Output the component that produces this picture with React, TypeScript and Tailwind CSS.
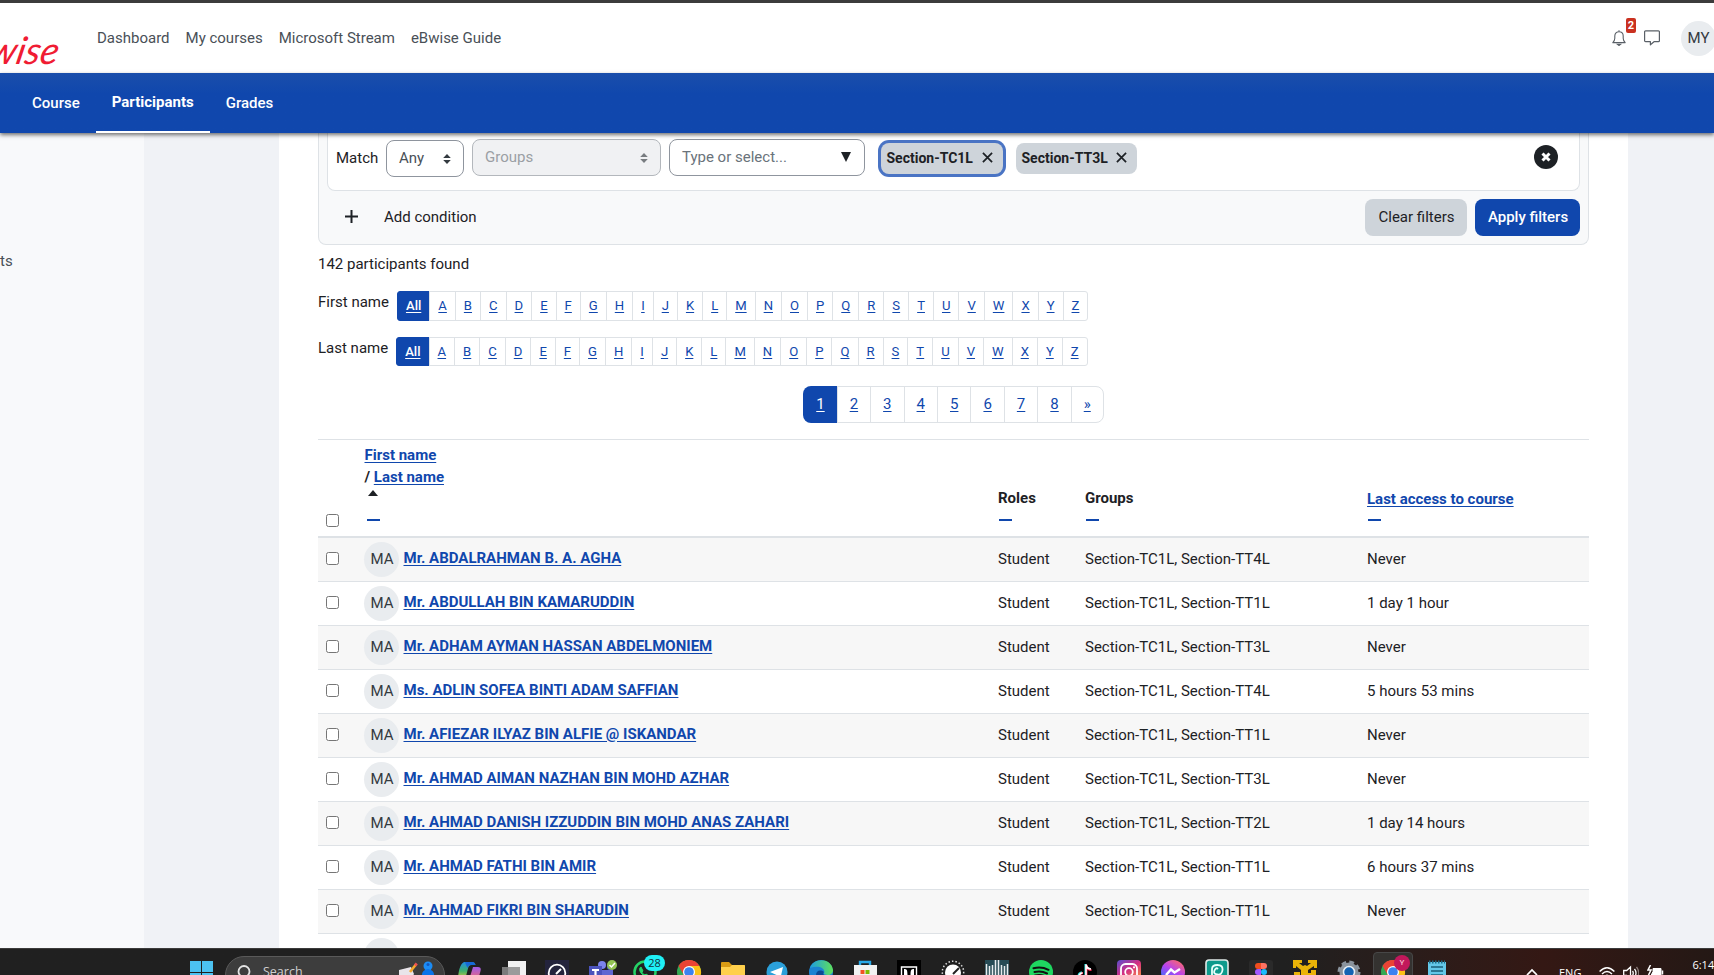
import React from "react";

const LETTERS = "ABCDEFGHIJKLMNOPQRSTUVWXYZ".split("");

const PEOPLE = [
  ["Mr. ABDALRAHMAN B. A. AGHA", "TT4L", "Never"],
  ["Mr. ABDULLAH BIN KAMARUDDIN", "TT1L", "1 day 1 hour"],
  ["Mr. ADHAM AYMAN HASSAN ABDELMONIEM", "TT3L", "Never"],
  ["Ms. ADLIN SOFEA BINTI ADAM SAFFIAN", "TT4L", "5 hours 53 mins"],
  ["Mr. AFIEZAR ILYAZ BIN ALFIE @ ISKANDAR", "TT1L", "Never"],
  ["Mr. AHMAD AIMAN NAZHAN BIN MOHD AZHAR", "TT3L", "Never"],
  ["Mr. AHMAD DANISH IZZUDDIN BIN MOHD ANAS ZAHARI", "TT2L", "1 day 14 hours"],
  ["Mr. AHMAD FATHI BIN AMIR", "TT1L", "6 hours 37 mins"],
  ["Mr. AHMAD FIKRI BIN SHARUDIN", "TT1L", "Never"],
];

const COLS = "grid grid-cols-[46px_633px_87px_282px_1fr]";

function Header() {
  return (
    <header className="flex h-[73px] shrink-0 items-start border-t-[3px] border-[#3c3c3c] bg-white text-[#495057]">
      <div className="flex h-[70px] w-[97px] shrink-0 items-start justify-end overflow-hidden pr-[42px] pt-[22px]">
        <span className="origin-bottom -skew-x-12 whitespace-nowrap font-['Lato'] text-[38px] font-normal italic leading-[48px] text-[#f01c33]">wise</span>
      </div>
      <nav className="flex gap-4 pt-[24px]">
        <span>Dashboard</span>
        <span>My courses</span>
        <span>Microsoft Stream</span>
        <span>eBwise Guide</span>
      </nav>
      <div className="-mr-[2px] ml-auto flex h-[70px] shrink-0 items-center">
        <div className="relative mr-[18px] h-4 w-[14px]">
          <svg viewBox="0 0 14 16" className="h-4 w-[14px]" fill="none" stroke="#5a6067" strokeWidth="1.1">
            <path d="M7 .3v1.3M.8 12.6h12.4c-1.400-1.200-2-2.400-2-4.300V6C11.200 3.400 9.400 1.700 7 1.700S2.800 3.400 2.800 6v2.300c0 1.900-.6 3.100-2 4.300Z" strokeLinejoin="round" />
            <path d="M5.400 14.200h3.200L7 15.500Z" fill="#5a6067" />
          </svg>
          <span className="absolute left-[14px] top-[-12px] h-[15px] w-[10px] rounded-[2px] bg-[#ca3120] text-center text-[11px] font-bold leading-[15px] text-white">2</span>
        </div>
        <svg viewBox="0 0 16 16" className="mr-[21px] size-4" fill="none" stroke="#5a6067" strokeWidth="1.2">
          <path d="M1.600.8h12.800a1 1 0 0 1 1 1v8.900a1 1 0 0 1-1 1H10l-3.600 3.100v-3.100H1.600a1 1 0 0 1-1-1V1.800a1 1 0 0 1 1-1Z" strokeLinejoin="round" />
        </svg>
        <span className="flex size-[35px] shrink-0 items-center justify-center rounded-full bg-[#e9ecef] text-[15px] text-[#343a40]">MY</span>
      </div>
    </header>
  );
}

function CourseNav() {
  return (
    <nav className="relative z-10 flex h-[60px] shrink-0 bg-linear-to-b from-[#1a4eab] to-[#1047ad] to-35% pl-[16px] text-white shadow-[0_2px_4px_rgba(0,0,0,0.55)]">
      <span className="px-4 pt-[19px] font-medium">Course</span>
      <span className="border-b-2 border-white px-4 pt-[18px] font-bold">Participants</span>
      <span className="px-4 pt-[19px] font-medium">Grades</span>
    </nav>
  );
}

function Sorter({ className }: { className: string }) {
  return (
    <svg viewBox="0 0 8 10" className={`h-[10px] w-2 ${className}`} fill="currentColor">
      <path d="M4 0l3.800 4H.2ZM4 10 .2 6h7.600Z" />
    </svg>
  );
}

function Tag({ text, active }: { text: string; active?: boolean }) {
  return (
    <span className={`flex h-[31px] items-center whitespace-nowrap rounded-lg bg-[#ced4da] pl-[5.500px] pr-[10px] font-bold text-[#1d2125] ${active ? "w-[122px] ring-3 ring-[#4a74c4]" : "w-[121px]"}`}>
      <span className="text-[14px]">{text}</span>
      <svg viewBox="0 0 12 12" className="ml-auto mb-[3px] size-[11px]" stroke="#1d2125" strokeWidth="1.9">
        <path d="M1 1l10 10M11 1L1 11" />
      </svg>
    </span>
  );
}

function Filters() {
  return (
    <section className="h-[112px] rounded-b-lg border border-t-0 border-[#dee2e6] bg-[#f8f9fa] px-2">
      <div className="flex h-[58px] items-start rounded-b-lg border border-t-0 border-[#dee2e6] bg-white pl-2 pr-[21px] pt-[6px]">
        <span className="w-[50px] pt-[8px]">Match</span>
        <span className="mt-px flex h-[37px] w-[78px] items-center justify-between rounded-lg border border-[#8f959e] bg-white pl-3 pr-3 text-[#495057]">Any<Sorter className="text-[#343a40]" /></span>
        <span className="ml-2 flex h-[37px] w-[189px] items-center justify-between rounded-lg border border-[#b3b7bc] bg-[#f0f1f3] pl-3 pr-3 text-[#9b9fa4]">Groups<Sorter className="text-[#787c80]" /></span>
        <span className="ml-2 flex h-[37px] w-[196px] items-center justify-between rounded-lg border border-[#8f959e] bg-white pl-3 pr-[13px] text-[#6a737b]">Type or select...
          <svg viewBox="0 0 10 10" className="mb-[2px] size-[10px]" fill="#1d2125"><path d="M0 0h10L5 10Z" /></svg>
        </span>
        <div className="ml-4 mt-1 flex gap-[13px]">
          <Tag text="Section-TC1L" active />
          <Tag text="Section-TT3L" />
        </div>
        <svg viewBox="0 0 24 24" className="ml-auto mt-[6px] size-6">
          <circle cx="12" cy="12" r="12" fill="#1d2125" />
          <path d="M8.500 8.500l7 7m0-7-7 7" stroke="#fff" strokeWidth="3" />
        </svg>
      </div>
      <div className="flex h-[53px] items-center text-[#1d2125]">
        <svg viewBox="0 0 13 13" className="mb-[2px] ml-[18px] size-[13px]" stroke="#1d2125" strokeWidth="2"><path d="M6.500 0v13M0 6.500h13" /></svg>
        <span className="ml-[26px]">Add condition</span>
        <button className="ml-auto mr-2 h-[37px] w-[102px] rounded-lg bg-[#ced4da] pl-px">Clear filters</button>
        <button className="h-[37px] w-[105px] rounded-lg bg-[#1047ad] pl-px font-medium text-white">Apply filters</button>
      </div>
    </section>
  );
}

function Initials({ label, className }: { label: string; className: string }) {
  return (
    <div className={`flex ${className}`}>
      <span className="mr-2 whitespace-nowrap">{label}</span>
      <div className="flex text-[13.1px] leading-[20px] text-[#1047ad]">
        <span className="rounded-l-[3px] border border-[#1047ad] bg-[#1047ad] px-2 py-1 font-medium text-white underline underline-offset-2">All</span>
        {LETTERS.map((l) => (
          <span key={l} className="-ml-px border border-[#dee2e6] px-2 py-1 underline underline-offset-2 last:rounded-r-[3px] first-of-type:ml-0">{l}</span>
        ))}
      </div>
    </div>
  );
}

function Pager() {
  return (
    <div className="mt-[20px] flex h-[37px] justify-center text-[#1047ad]">
      <span className="rounded-l-lg bg-[#1047ad] px-[13px] py-[7px] text-white underline underline-offset-2">1</span>
      {["2", "3", "4", "5", "6", "7", "8", "»"].map((p) => (
        <span key={p} className="-ml-px border border-[#dee2e6] px-3 py-[6px] underline underline-offset-2 last:rounded-r-lg">{p}</span>
      ))}
    </div>
  );
}

function Box({ className }: { className: string }) {
  return <span className={`size-[13px] rounded-[2.5px] border border-[#767676] bg-white ${className}`} />;
}

function Dash() {
  return <span className="ml-px h-[2px] w-[13px] bg-[#1047ad]" />;
}

function Table() {
  return (
    <div className="mt-4 border-t border-[#dee2e6]">
      <div className={`${COLS} h-[98px] border-b-2 border-[#dee2e6] font-bold`}>
        <Box className="ml-2 mt-[74px]" />
        <div className="flex flex-col items-start pl-[0.500px] pt-[4px] leading-[22px] text-[#1047ad]">
          <span className="underline underline-offset-2">First name</span>
          <span><span className="text-[#1d2125]">/ </span><span className="underline underline-offset-2">Last name</span></span>
          <svg viewBox="0 0 10 6" className="ml-[3px] mt-[2px] h-[6px] w-[10px]" fill="#1d2125"><path d="M5 0l5 6H0Z" /></svg>
          <span className="ml-[2px] mt-[23px] h-[2px] w-[13px] bg-[#1047ad]" />
        </div>
        <div className="flex flex-col gap-[10px] pl-px pt-[47px] text-[#1d2125]">Roles<Dash /></div>
        <div className="flex flex-col gap-[10px] pl-px pt-[47px] text-[#1d2125]">Groups<Dash /></div>
        <div className="flex flex-col gap-[9px] pl-px pt-[48px] text-[#1047ad]"><span className="underline underline-offset-2">Last access to course</span><Dash /></div>
      </div>
      {PEOPLE.map(([name, group, access], i) => (
        <div key={name} className={`${COLS} h-[44px] border-b border-[#dee2e6] pt-1 ${i % 2 === 0 ? "bg-[#f7f7f7]" : "bg-white"}`}>
          <Box className="ml-2 mt-[10px]" />
          <div className="flex items-start">
            <span className="flex size-[35px] shrink-0 items-center justify-center rounded-full bg-[#e9ecef] pl-px text-[#343a40]">MA</span>
            <span className="ml-[4.500px] pt-[5px] font-bold text-[#1047ad] underline underline-offset-2">{name}</span>
          </div>
          <span className="pl-px pt-[6px]">Student</span>
          <span className="pl-px pt-[6px]">Section-TC1L, Section-{group}</span>
          <span className="pl-px pt-[6px]">{access}</span>
        </div>
      ))}
      <div className={`${COLS} h-[44px] pt-1`}>
        <span />
        <span className="size-[35px] rounded-full bg-[#e9ecef]" />
      </div>
    </div>
  );
}

function ChromeGlyph() {
  return (
    <g>
      <circle cx="12" cy="12" r="12" fill="#34a853" />
      <path d="M1.600 6A12 12 0 0 1 22.400 6L12 12Z" fill="#ea4335" />
      <path d="M12 6h10.400A12 12 0 0 1 12 24l5.200-9Z" fill="#fbc116" />
      <path d="M12 6h10.400A12 12 0 0 0 1.600 6l5.200 9Z" fill="#ea4335" />
      <circle cx="12" cy="12" r="6" fill="#fff" />
      <circle cx="12" cy="12" r="4.800" fill="#3b82f0" />
    </g>
  );
}

const APPS: React.ReactNode[] = [
  <g>
    <path d="M8 2h7c2 0 3 1 3.500 3h-4c-2 0-3 1.500-3.500 3.500L8 20H1c0-7 2-18 7-18Z" fill="url(#cop)" />
    <path d="M16 7h5c3 0 3 2 2.500 4L21 20h-9Z" fill="url(#cop2)" />
    <path d="M8 2h7c2 0 3 1 3.500 3h-5c-1.500 0-2.500 1-3 3L9 5Z" fill="#1668d6" />
  </g>,
  <g><path d="M7 1h18v18H7Z" fill="#f1f1f1" /><path d="M1 7h18v14H1Z" fill="#8c8c8c" opacity=".85" /></g>,
  <g><path d="M0 0h24v20H0Z" fill="#23233c" /><circle cx="12" cy="13" r="8.300" fill="none" stroke="#fff" strokeWidth="1.800" /><path d="m11 14 5-5" stroke="#fff" strokeWidth="2" /></g>,
  <g><circle cx="13" cy="5" r="4" fill="#7b83eb" /><circle cx="21" cy="7" r="3" fill="#5059c9" /><path d="M8 10h16v8H8Z" fill="#5f67d2" /><path d="M0 6h13v12H0Z" fill="#4b53bc" /><path d="M3 9h7v2H7.600v7H5.400v-7H3Z" fill="#fff" /><circle cx="23" cy="5" r="5" fill="#92c353" /><path d="m20.500 5 2 2 3.500-4" fill="none" stroke="#fff" strokeWidth="1.500" /></g>,
  <g><circle cx="12" cy="12" r="10.500" fill="#202020" stroke="#25d366" strokeWidth="2.500" /><path d="M8 7c-2 1-2 4 1 7s5 4 7 2l-3-2-1 1c-2-1-3-2-3-3l1-1Z" fill="#25d366" stroke="#25d366" /></g>,
  <ChromeGlyph />,
  <g><path d="M0 3q0-1 1-1h7l3 3h12q1 0 1 1v14H0Z" fill="#d99b14" /><path d="M0 7h9l2-2h12q1 0 1 1v14H0Z" fill="#ffd04c" /></g>,
  <g><circle cx="12" cy="12" r="10.500" fill="#2ba0da" /><path d="m5 12 13-5-2.500 11-4-3Z" fill="#fff" /></g>,
  <g><circle cx="12" cy="12" r="12" fill="#1b83d2" /><path d="M1 8C4-2 22-3 24 10c0 5-5 6-9 4 2-6-5-9-14-6Z" fill="url(#edge)" /><path d="M7 15c0-4 4-6 8-3-1 1-1 2 0 3Z" fill="#0c4a94" /></g>,
  <g><path d="M7 5V2h10v3" fill="none" stroke="#29a9e8" strokeWidth="2.400" /><path d="M1 5h23v16H1Z" fill="#f2f2f2" /><path d="M7.500 10h4v4h-4Z" fill="#f25022" /><path d="M12.500 10h4v4h-4Z" fill="#7fba00" /></g>,
  <g><path d="M0 0h24v20H0Z" fill="#000" /><path d="M4.500 7h15v10h-15Z" fill="none" stroke="#fff" strokeWidth="1.400" /><path d="M7 9c3 0 3.500 1 3.500 7H7Zm10 0c-3 0-3.500 1-3.500 7H17Z" fill="#fff" /></g>,
  <g><circle cx="12" cy="12" r="10.700" fill="none" stroke="#ddd" strokeWidth="1.500" strokeDasharray="1.500 2" /><circle cx="12" cy="12.500" r="8" fill="#fff" /><path d="m12 14 6-6" stroke="#222" strokeWidth="2" /></g>,
  <g><path d="M0 0h24v20H0Z" fill="#264b55" /><path d="M1.500 4v12M4.500 6v10M7.500 5v10M10.500 0v16M13.500 0v16M16.500 5v10M19.500 6v10M22.500 4v12" stroke="#e6ecee" strokeWidth="1.500" /></g>,
  <g><circle cx="12" cy="12" r="12" fill="#1ed760" /><path d="M4.500 8.200q8-2 15 1.600M5.500 12q7-1.500 12.500 1.500M6 15.500q6-1.500 11 1.300" fill="none" stroke="#111" strokeWidth="2" strokeLinecap="round" /></g>,
  <g><circle cx="12" cy="12" r="12" fill="#000" /><path d="M12.500 4v12a3.500 3.500 0 1 1-3.500-3.500M12.500 5c.5 3 2.500 4 5 4" fill="none" stroke="#25f4ee" strokeWidth="2" /><path d="M13.500 5v11a3.500 3.500 0 1 1-3.500-3M13.500 5c.5 3 2.500 5 5 5" fill="none" stroke="#fe2c55" strokeWidth="2" /><path d="M13 4.500v11.500a3.500 3.500 0 1 1-3.500-3M13 4.500c.5 3 2.500 4.500 5 4.500" fill="none" stroke="#fff" strokeWidth="1.600" /></g>,
  <g><rect width="24" height="24" rx="4" fill="url(#ig)" /><rect x="4" y="4" width="16" height="16" rx="4.500" fill="none" stroke="#fff" strokeWidth="1.800" /><circle cx="12" cy="12" r="3.800" fill="none" stroke="#fff" strokeWidth="1.800" /><circle cx="17" cy="7.300" r="1.100" fill="#fff" /></g>,
  <g><circle cx="12" cy="12" r="12" fill="url(#ms)" /><path d="m5 15 5-5.500 3.500 3L19 9" fill="none" stroke="#fff" strokeWidth="2.400" /></g>,
  <g><rect x="1" width="22" height="24" rx="3" fill="#0d9a8c" stroke="#dfe9e7" strokeWidth="1.600" /><path d="M7 17V9q0-4 5.500-4t5 5-5 4.500-3-4 3.500-1.500" fill="none" stroke="#e8fffb" strokeWidth="1.800" /></g>,
  <g><rect width="24" height="24" rx="3" fill="#2a2a2a" /><path d="M12 3v6H9a3 3 0 0 1 0-6Z" fill="#f24e1e" /><path d="M12 3h3a3 3 0 0 1 0 6h-3Z" fill="#ff7262" /><path d="M12 9v6H9a3 3 0 0 1 0-6Z" fill="#a259ff" /><circle cx="15" cy="12" r="3" fill="#1abcfe" /></g>,
  <g><path d="M0 0h9v3H6l4 3 2-1 2 1 4-3h-3V0h9v8h-3V6l-6 4v3h4v3H8V10L3 6v2H0Z" fill="#eab308" /><path d="M1 12h6v7H1Zm17-2h5v8h-5Z" fill="#eab308" /></g>,
  <g><circle cx="12" cy="12" r="8.500" fill="#8b949e" stroke="#8b949e" strokeWidth="6" strokeDasharray="4 2.680" /><circle cx="12" cy="12" r="9.500" fill="#8b949e" /><circle cx="12" cy="12" r="5.500" fill="#1463b3" stroke="#e8eef4" strokeWidth="1.500" /></g>,
  <ChromeGlyph />,
  <g><path d="M3 2h18v19H3Z" fill="#63c7e8" /><path d="M4 2h16" stroke="#1c6d88" strokeWidth="3" strokeDasharray="1.500 1.500" /><path d="M6 7h12M6 11h12M6 15h12" stroke="#1b5f78" strokeWidth="1.500" /></g>,
];

function Taskbar() {
  return (
    <footer className="flex h-[27px] w-full shrink-0 items-start overflow-hidden border-t border-[#3b3b3b] bg-linear-to-r from-[#202020] from-75% via-[#341814] via-90% to-[#241815] text-white">
      <svg className="absolute size-0">
        <defs>
          <linearGradient id="cop" x1="0" y1="0" x2="0" y2="1"><stop stopColor="#1f8fe5" /><stop offset=".5" stopColor="#3fb16b" /><stop offset="1" stopColor="#f3cc2f" /></linearGradient>
          <linearGradient id="cop2" x1="0" y1="0" x2="0" y2="1"><stop stopColor="#a05be8" /><stop offset="1" stopColor="#f06a6d" /></linearGradient>
          <linearGradient id="edge"><stop stopColor="#1e9de0" /><stop offset="1" stopColor="#5fe05a" /></linearGradient>
          <linearGradient id="ig" x1="0" y1="0" x2=".7" y2="1"><stop stopColor="#5a4fd0" /><stop offset=".5" stopColor="#d52d82" /><stop offset="1" stopColor="#fb9a3c" /></linearGradient>
          <linearGradient id="ms" x1=".8" y1="0" x2=".2" y2="1"><stop stopColor="#ff6968" /><stop offset=".45" stopColor="#b742f0" /><stop offset="1" stopColor="#1a7bff" /></linearGradient>
        </defs>
      </svg>
      <svg viewBox="0 0 23 23" className="ml-[190px] mt-[12px] size-[23px] shrink-0" fill="#4cc2f1"><path d="M0 0h11v11H0ZM12 0h11v11H12ZM0 12h11v11H0ZM12 12h11v11H12Z" /></svg>
      <div className="ml-3 mt-[7px] flex h-[38px] w-[220px] shrink-0 items-start overflow-hidden rounded-full border border-[#5a5a5a] bg-[#3d3d3d] pl-[11px]">
        <svg viewBox="0 0 14 16" className="mt-[8px] h-4 w-[14px]" fill="none" stroke="#e4e4e4" strokeWidth="1.800"><circle cx="7" cy="6.500" r="5.500" /><path d="m3 11-3 4" /></svg>
        <span className="ml-3 mt-[5px] font-['Open_Sans'] text-[12.500px] leading-[20px] text-[#cfcfcf]">Search</span>
        <svg viewBox="0 0 38 24" className="ml-auto mr-[8px] mt-[4px] h-6 w-[38px] shrink-0">
          <path d="m1 9 12-3 3 7-3 5-12-1Z" fill="#e9e4ea" /><path d="m12 11 5.500-7" stroke="#f4a92c" strokeWidth="2.600" /><path d="m17 4.500 1.800-2" stroke="#ef5350" strokeWidth="2.800" />
          <circle cx="30" cy="5" r="4.500" fill="#1b8cf5" /><path d="M24 16q-1-7 6-8 7 1 6 8Z" fill="#0a74ea" /><circle cx="30" cy="3.500" r="1.500" fill="#1158c0" />
        </svg>
      </div>
      <div className="ml-3 flex shrink-0 gap-5 pt-[11px]">
        {APPS.map((icon, i) => (
          <span key={i} className="relative block size-6 shrink-0">
            {i === 21 && <span className="absolute -left-2 -top-2 h-9 w-[40px] rounded-[4px] border border-[#474747] bg-[#343230]" />}
            <svg viewBox="0 0 24 24" className="relative size-6 overflow-visible">{icon}</svg>
            {i === 4 && <span className="absolute left-[11px] top-[-5px] flex h-4 w-[21px] items-center justify-center rounded-full bg-[#1ff0f5] font-['Open_Sans'] text-[11px] text-[#12313a]">28</span>}
            {i === 21 && <span className="absolute left-[13px] top-[-5px] flex size-4 items-center justify-center rounded-full bg-[#c2185b] text-[8px] font-medium text-[#f3bcd0]">Y</span>}
          </span>
        ))}
      </div>
      <svg viewBox="0 0 12 8" className="ml-[77px] mt-[19px] h-2 w-3 shrink-0" fill="none" stroke="#fff" strokeWidth="1.700"><path d="m1 7 5-5 5 5" /></svg>
      <span className="ml-[21px] mt-[15px] shrink-0 font-['Open_Sans'] text-[11px] leading-[17px]">ENG</span>
      <svg viewBox="0 0 16 16" className="ml-[18px] mt-[17px] size-4 shrink-0" fill="none" stroke="#fff" strokeWidth="1.400"><path d="M.6 5.500Q8-2 15.400 5.500M3 8q5-5 10 0M5.500 10.500q2.500-2.500 5 0" /></svg>
      <svg viewBox="0 0 16 16" className="ml-2 mt-[16px] size-4 shrink-0" fill="none" stroke="#fff" strokeWidth="1.300"><path d="M.7 5.500h3L7.500 2v12l-3.800-3.500h-3ZM9.500 6q1.500 2 0 4.500M11.500 3.800q3 4 0 8.400" /><path d="M13.500 1.800q4.500 6 0 12.400" stroke="#8c7c79" /></svg>
      <svg viewBox="0 0 17 16" className="ml-[8px] mt-[16px] h-4 w-[17px] shrink-0"><path d="M6 3.500h8v9H3l3-6Z" fill="#fff" stroke="#fff" /><path d="M15.500 5.500v4M3.500 0 1 5h3L1.500 10" stroke="#fff" strokeWidth="1.500" fill="none" /></svg>
      <span className="ml-[28px] mt-[7px] shrink-0 whitespace-nowrap font-['Open_Sans'] text-[11px] leading-[17px]">6:14 PM</span>
    </footer>
  );
}

export default function App() {
  return (
    <div className="flex h-[975px] w-[1714px] flex-col overflow-hidden bg-[#f0f2f6] font-['Roboto',sans-serif] text-[15px] leading-[22.500px] text-[#1d2125]">
      <Header />
      <CourseNav />
      <div className="flex h-[815px] shrink-0 overflow-hidden">
        <aside className="w-[144px] shrink-0 bg-[#f8f9fb] pt-[117px] text-[#495057]">
          <span className="block w-[11px] text-right">ts</span>
        </aside>
        <main className="ml-[135px] w-[1349px] shrink-0 bg-white pl-[39px] pr-[39px]">
          <Filters />
          <p className="mt-2">142 participants found</p>
          <Initials label="First name" className="mt-[15px] h-[30px]" />
          <Initials label="Last name" className="mt-[16px] h-[29px]" />
          <Pager />
          <Table />
        </main>
      </div>
      <Taskbar />
    </div>
  );
}
